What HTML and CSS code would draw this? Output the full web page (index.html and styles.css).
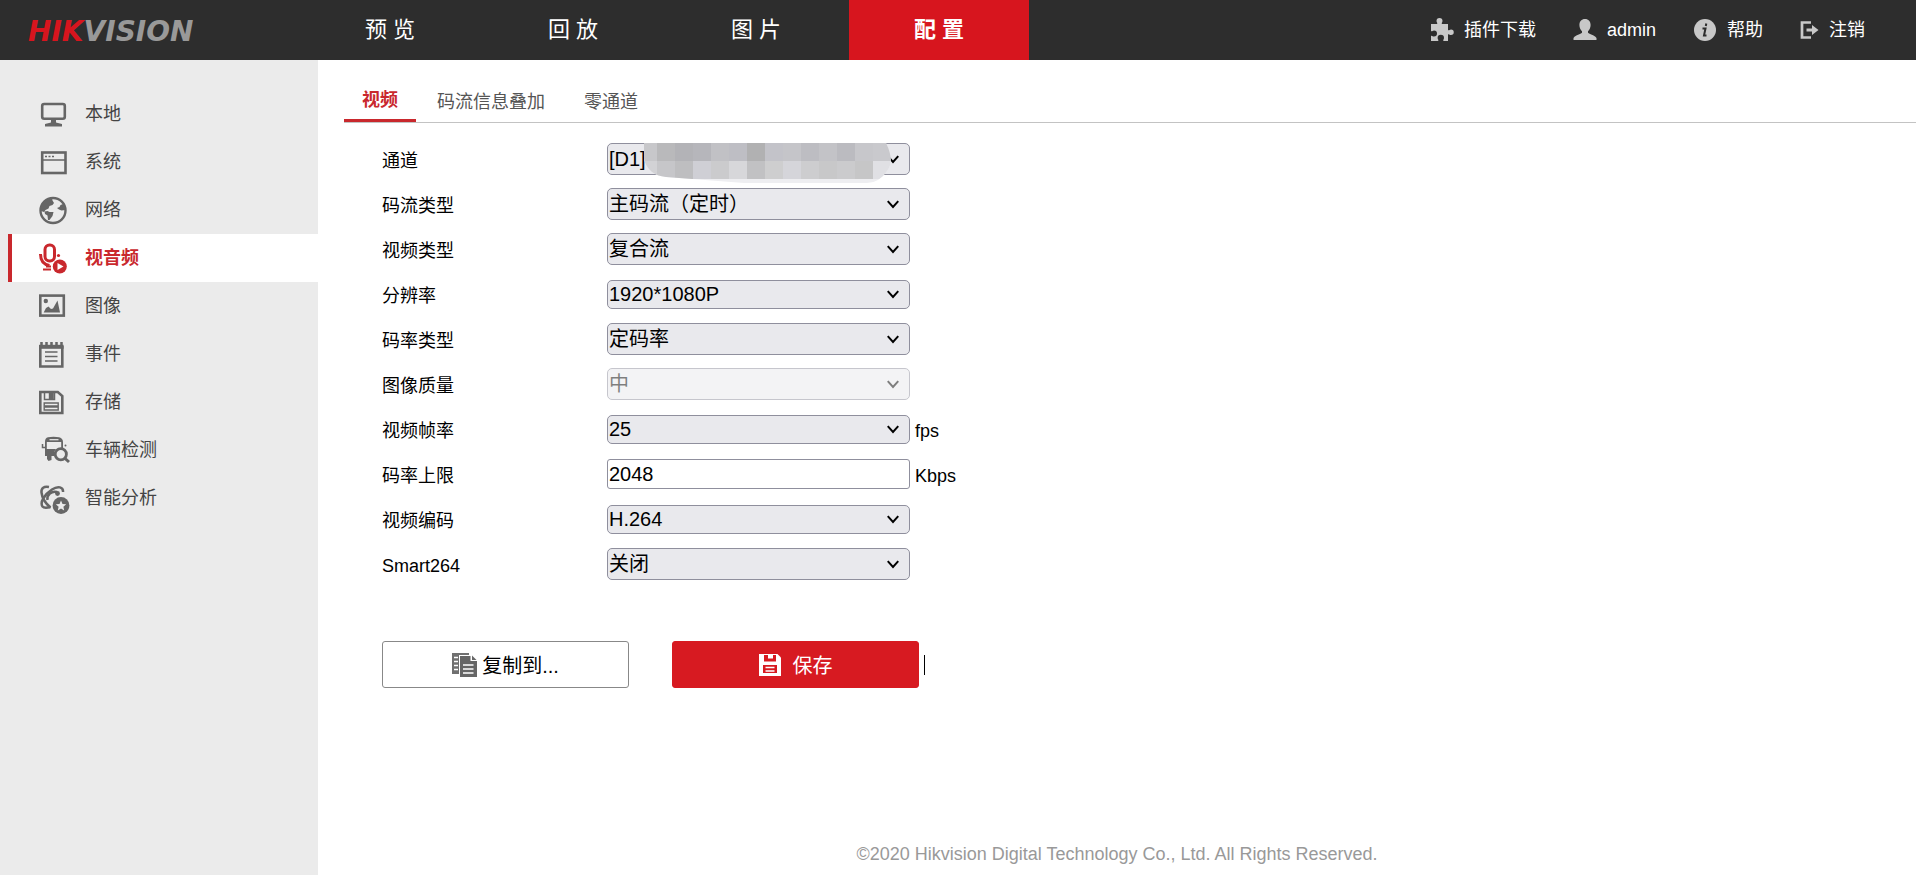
FILE: index.html
```
<!DOCTYPE html>
<html lang="zh-CN">
<head>
<meta charset="UTF-8">
<meta name="viewport" content="width=device-width, initial-scale=1">
<title>配置</title>
<link rel="stylesheet" href="styles.css">
</head>
<body>

<svg class="sprite" aria-hidden="true">
  <symbol id="chevron" viewBox="0 0 12 12">
    <path d="M1.500 3.500 6 8.500l4.500-5" fill="none" stroke="currentColor" stroke-width="1.700"/>
  </symbol>
</svg>

<header class="header">
  <a class="logo" href="#"><span>HIK</span>VISION</a>
  <nav class="nav">
    <a href="#">预 览</a>
    <a href="#">回 放</a>
    <a href="#">图 片</a>
    <a href="#" class="active">配 置</a>
  </nav>
  <div class="tools">
    <a href="#">
      <svg width="24" height="24" viewBox="0 0 24 24" fill="currentColor"><path d="M1 6h6c1-1-.5-1.500-.5-3a3 3 0 0 1 6 0c0 1.500-1.500 2-.5 3h6v6c1 1 1.500-.5 3-.5a2.700 2.700 0 0 1 0 5.500c-1.500 0-2-1.500-3-.5V23h-4.500c-1-1 .5-1.500.5-3a3.200 3.200 0 0 0-6.400 0c0 1.500 1.500 2 .5 3H1v-5c1-1 1.500.5 3 .5a3 3 0 0 0 0-6c-1.500 0-2 1.500-3 .5z"/></svg>
      插件下载
    </a>
    <a href="#">
      <svg width="24" height="24" viewBox="0 0 24 24" fill="currentColor"><path d="M12 1c3.500 0 5.600 2.400 5.600 6 0 2.600-1 4.800-2.600 6.200v1.600c1.500 1.700 6 1.900 8.500 5.200V22H.5v-2c2.500-3.300 7-3.500 8.500-5.200v-1.600C7.400 11.800 6.400 9.600 6.400 7c0-3.600 2.100-6 5.600-6z"/></svg>
      admin
    </a>
    <a href="#">
      <svg width="24" height="24" viewBox="0 0 24 24"><circle cx="12" cy="12" r="11" fill="currentColor"/><path d="M9.500 10.500h3L11 17.500h2.500M13.300 5.500 12.800 8" fill="none" stroke="#2d2d2d" stroke-width="2"/></svg>
      帮助
    </a>
    <a href="#">
      <svg width="19" height="24" viewBox="0 0 19 24"><path d="M11 4.500H2v15h9" fill="none" stroke="currentColor" stroke-width="2.700"/><path d="M6.500 10.500H12V7l6.500 5-6.500 5v-3.500H6.500z" fill="currentColor"/></svg>
      注销
    </a>
  </div>
</header>

<div class="wrap">
  <aside class="sidebar">
    <a href="#">
      <svg viewBox="0 0 32 32"><rect x="3.200" y="6" width="22.600" height="14.700" rx="2" fill="none" stroke="currentColor" stroke-width="2.600"/><path d="M12 21h5v3.500l6 1.500v2.500H6V26l6-1.500z" fill="currentColor"/></svg>
      本地
    </a>
    <a href="#">
      <svg viewBox="0 0 32 32" fill="none" stroke="currentColor"><rect x="3.200" y="6.500" width="23.300" height="20.500" stroke-width="2.600"/><path d="M3 14h24" stroke-width="1.500"/><path d="M6 10.500h2m1.500 0h2m1.500 0h2" stroke-width="1.600"/></svg>
      系统
    </a>
    <a href="#">
      <svg viewBox="0 0 32 32"><circle cx="14" cy="16.500" r="12.500" fill="none" stroke="currentColor" stroke-width="2.400"/><path d="M2 15C3 9 7 5 13 4l.5 2.500L15 9l-1.500 2-3 1-1 2.500-3 1.500L5 18l-3-1zM5.500 17.500l3-.5 2 1 4 0-1 4-3 4H9l-.5-4.500L6 20zM18 14l2.500-1 1-2 4-1.500 1 6.500-4 .5-2.500-1z" fill="currentColor"/></svg>
      网络
    </a>
    <a href="#" class="active">
      <svg viewBox="0 0 32 32"><g fill="none" stroke="currentColor"><rect x="6" y="3" width="9.500" height="16" rx="4.500" stroke-width="3"/><path d="M1.500 12c0 6 3 10.500 9 11.500" stroke-width="3"/><path d="M4 27.500h8M7 24.500h5" stroke-width="2.200"/></g><circle cx="19.500" cy="13.500" r="1.600" fill="currentColor"/><circle cx="20.800" cy="24.500" r="7" fill="currentColor"/><path d="M18.500 21v7l6-3.500z" fill="#fff"/></svg>
      视音频
    </a>
    <a href="#">
      <svg viewBox="0 0 32 32"><rect x="1.300" y="5.600" width="23.500" height="20" fill="none" stroke="currentColor" stroke-width="2.600"/><circle cx="6.800" cy="11" r="2.200" fill="currentColor"/><path d="M4.700 22.500 7 18l2.500-1.500L12 19l2-.5 4.500-8 2.500 12z" fill="currentColor"/></svg>
      图像
    </a>
    <a href="#">
      <svg viewBox="0 0 32 32" fill="none" stroke="currentColor"><path d="M1.300 8v20.500h22V8" stroke-width="2.600"/><path d="M0 8.800h24.600" stroke-width="4"/><path d="M2.500 4v5m5-5v5m5-5v5m5-5v5m5-5v5" stroke-width="2.500"/><path d="M6 14h12.500M6 18.500h12.500M6 23h12.500" stroke-width="1.500"/></svg>
      事件
    </a>
    <a href="#">
      <svg viewBox="0 0 32 32" fill="none" stroke="currentColor"><path d="M1.300 6h17.500l4.500 4v17H1.300z" stroke-width="2.600"/><path d="M5.500 5.500v8h10v-8" stroke-width="1.500"/><path d="M12.300 6v7" stroke-width="5"/><path d="M5.200 17h14v7h-14z" stroke-width="1.400"/><path d="M5.500 20.500h13.500" stroke-width="2.500"/></svg>
      存储
    </a>
    <a href="#">
      <svg viewBox="0 0 32 32"><path d="M6 8c0-3 1-4.200 3-4.700 3-.8 8-.8 11 0 2 .5 4 1.700 4 4.700v6h-1.800V8H7.800v7H17l-2 3v4h-2.500v4L9.500 27 8 25v-3H6z" fill="currentColor"/><path d="M3.500 10v3.500H6" fill="none" stroke="currentColor" stroke-width="1.500"/><path d="M10.500 5.700h9" stroke="#ebebeb" stroke-width="1.200"/><circle cx="26.500" cy="11.500" r="1" fill="currentColor"/><circle cx="21.800" cy="20.300" r="5.600" fill="#ebebeb" stroke="currentColor" stroke-width="2.800"/><path d="m25.500 24 4.500 4" stroke="currentColor" stroke-width="3"/></svg>
      车辆检测
    </a>
    <a href="#">
      <svg viewBox="0 0 32 32"><g fill="none" stroke="currentColor" stroke-width="2.500"><path d="M10 5C5 4 2 6 2.500 10.500S6 21 11.500 25.500"/><path d="M24 10c.5-5-5-6.500-11-2.500C6 12 .5 20 3.500 24.500c1.500 2 4.500 1.500 8 .5"/><path d="M8.500 18c-1-5 4-9.500 9.500-8"/></g><circle cx="18.500" cy="11.500" r="2.400" fill="currentColor"/><circle cx="22" cy="23.500" r="8.400" fill="currentColor"/><path d="m22 18.500 1.500 3.400 3.700.4-2.800 2.500.8 3.700-3.200-1.900-3.200 1.900.8-3.700-2.800-2.500 3.700-.4z" fill="#ebebeb"/></svg>
      智能分析
    </a>
  </aside>

  <main class="main">
    <nav class="tabs">
      <a href="#" class="active">视频</a>
      <a href="#">码流信息叠加</a>
      <a href="#">零通道</a>
    </nav>

    <form class="form">
      <div class="row">
        <label for="channel">通道</label>
        <div class="field">
          <select id="channel"><option>[D1]</option></select>
          <svg class="arrow"><use href="#chevron"/></svg>
          <!-- channel name is masked -->
          <svg class="mask" viewBox="0 0 247 41">
            <clipPath id="smear"><path d="M0 0h242q9 18 1 28-8 12-20 12H100L22 34Q4 32 0 16z"/></clipPath>
            <g clip-path="url(#smear)" shape-rendering="crispEdges">
              <path fill="#eeeef1" d="M0 0h247v41H0z"/>
              <path fill="#c7c7ca" d="M0 0h13v18H0z"/><path fill="#d2d2d5" d="M0 18h13v18H0z"/>
              <path fill="#b9b9bb" d="M13 0h18v18H13z"/><path fill="#c6c6c9" d="M13 18h18v18H13z"/>
              <path fill="#b3b3b7" d="M31 0h18v18H31z"/><path fill="#bebec0" d="M31 18h18v18H31z"/>
              <path fill="#b6b6bb" d="M49 0h18v18H49z"/><path fill="#cfcfd5" d="M49 18h18v18H49z"/>
              <path fill="#c1c1c5" d="M67 0h18v18H67z"/><path fill="#cbcbcd" d="M67 18h18v18H67z"/>
              <path fill="#bebec4" d="M85 0h18v18H85z"/><path fill="#d7d7da" d="M85 18h18v18H85z"/>
              <path fill="#b1b1b2" d="M103 0h18v18h-18z"/><path fill="#c1c1c3" d="M103 18h18v18h-18z"/>
              <path fill="#c3c3c9" d="M121 0h18v18h-18z"/><path fill="#cececf" d="M121 18h18v18h-18z"/>
              <path fill="#c5c5c9" d="M139 0h18v18h-18z"/><path fill="#d5d5da" d="M139 18h18v18h-18z"/>
              <path fill="#bdbdc2" d="M157 0h18v18h-18z"/><path fill="#cdcdcf" d="M157 18h18v18h-18z"/>
              <path fill="#c3c3c7" d="M175 0h18v18h-18z"/><path fill="#c8c8c9" d="M175 18h18v18h-18z"/>
              <path fill="#bbbbc0" d="M193 0h18v18h-18z"/><path fill="#cbcbcd" d="M193 18h18v18h-18z"/>
              <path fill="#c7c7cb" d="M211 0h18v18h-18z"/><path fill="#c6c6c7" d="M211 18h18v18h-18z"/>
              <path fill="#c9c9cd" d="M229 0h18v18h-18z"/><path fill="#e0e0e4" d="M229 18h18v18h-18z"/>
            </g>
          </svg>
        </div>
      </div>
      <div class="row">
        <label for="stream">码流类型</label>
        <div class="field">
          <select id="stream"><option>主码流（定时）</option></select>
          <svg class="arrow"><use href="#chevron"/></svg>
        </div>
      </div>
      <div class="row">
        <label for="video-type">视频类型</label>
        <div class="field">
          <select id="video-type"><option>复合流</option></select>
          <svg class="arrow"><use href="#chevron"/></svg>
        </div>
      </div>
      <div class="row">
        <label for="resolution">分辨率</label>
        <div class="field">
          <select id="resolution" class="short"><option>1920*1080P</option></select>
          <svg class="arrow"><use href="#chevron"/></svg>
        </div>
      </div>
      <div class="row">
        <label for="rate-type">码率类型</label>
        <div class="field">
          <select id="rate-type"><option>定码率</option></select>
          <svg class="arrow"><use href="#chevron"/></svg>
        </div>
      </div>
      <div class="row">
        <label for="quality">图像质量</label>
        <div class="field disabled">
          <select id="quality" disabled><option>中</option></select>
          <svg class="arrow"><use href="#chevron"/></svg>
        </div>
      </div>
      <div class="row">
        <label for="fps">视频帧率</label>
        <div class="field">
          <select id="fps" class="short"><option>25</option></select>
          <svg class="arrow"><use href="#chevron"/></svg>
        </div>
        <span class="unit">fps</span>
      </div>
      <div class="row">
        <label for="bitrate">码率上限</label>
        <div class="field">
          <input id="bitrate" type="text" value="2048">
        </div>
        <span class="unit">Kbps</span>
      </div>
      <div class="row">
        <label for="codec">视频编码</label>
        <div class="field">
          <select id="codec" class="short"><option>H.264</option></select>
          <svg class="arrow"><use href="#chevron"/></svg>
        </div>
      </div>
      <div class="row">
        <label for="smart">Smart264</label>
        <div class="field">
          <select id="smart"><option>关闭</option></select>
          <svg class="arrow"><use href="#chevron"/></svg>
        </div>
      </div>

      <div class="buttons">
        <button type="button" class="btn copy">
          <svg width="25" height="24" viewBox="0 0 25 24"><path d="M0 0h17v2H7v19H0z" fill="#707070"/><path d="M2 4.500h4M2 8.500h4M2 12.500h4M2 16.500h4" stroke="#fff" stroke-width="1.500"/><path d="M8 3h10.500v5H25v16H8z" fill="#666"/><path d="M20 2.500 24.500 7H20z" fill="#666"/><path d="M11 12h10.500M11 16h10.500M11 20h10.500" stroke="#fff" stroke-width="1.500"/></svg>
          复制到...
        </button>
        <button type="button" class="btn save">
          <svg width="22" height="22" viewBox="0 0 22 22"><path d="M0 0h18.500L22 3.500V22H0z" fill="#fff"/><path d="M5 1v6.500h12V1h-3v3.500H9V1zM4 11h14v8H4z" fill="#d71a21"/><path d="M6.500 13.500h9m-9 3.500h9" stroke="#fff" stroke-width="1.500"/></svg>
          保存
        </button>
        <span class="caret"></span>
      </div>
    </form>

    <footer class="footer">©2020 Hikvision Digital Technology Co., Ltd. All Rights Reserved.</footer>
  </main>
</div>

</body>
</html>
```
FILE: styles.css
```
* {
  box-sizing: border-box;
}
body {
  margin: 0;
  min-height: 100vh;
  display: flex;
  flex-direction: column;
  font-family: "Liberation Sans", Arial, "Noto Sans CJK SC", sans-serif;
  font-size: 18px;
  line-height: 24px;
  color: #000;
  background: #fff;
}
a {
  color: inherit;
  text-decoration: none;
}
svg {
  flex: none;
}
.sprite {
  display: none;
}

/* header */
.header {
  display: flex;
  height: 60px;
  background: #2d2d2d;
  color: #fff;
}
.logo {
  width: 300px;
  padding: 2px 0 0 28px;
  font: italic bold 28px/60px "DejaVu Sans", sans-serif;
  color: #999;
}
.logo span {
  color: #d7151e;
}
.nav {
  display: flex;
  gap: 3px;
}
.nav a {
  width: 180px;
  font-size: 22px;
  line-height: 60px;
  text-align: center;
}
.nav .active {
  background: #d7151e;
  font-weight: bold;
}
.tools {
  display: flex;
  gap: 37px;
  margin-left: auto;
  padding-right: 51px;
}
.tools a {
  display: flex;
  align-items: center;
  gap: 10px;
}
.tools svg {
  color: #c8c8c8;
}

/* sidebar */
.wrap {
  flex: 1;
  display: flex;
}
.sidebar {
  width: 318px;
  padding: 30px 0 0 8px;
  background: #ebebeb;
}
.sidebar a {
  display: flex;
  align-items: center;
  gap: 14px;
  height: 48px;
  padding-left: 27px;
  border-left: 4px solid transparent;
  color: #444;
}
.sidebar svg {
  width: 32px;
  height: 32px;
  color: #666;
}
.sidebar .active {
  background: #fff;
  border-color: #c9282d;
  color: #c9282d;
  font-weight: bold;
}
.sidebar .active svg {
  color: #c9282d;
}

/* content */
.main {
  flex: 1;
  display: flex;
  flex-direction: column;
}
.tabs {
  display: flex;
  gap: 3px;
  height: 63px;
  margin-left: 26px;
  border-bottom: 1px solid #c3c3c3;
}
.tabs a {
  padding: 30px 18px 0;
  color: #555;
}
.tabs .active {
  padding-top: 28px;
  border-bottom: 3px solid #c9282d;
  color: #c9282d;
  font-weight: bold;
}
.form {
  display: flex;
  flex-direction: column;
  gap: 13px;
  padding: 20px 0 0 64px;
}
.row {
  display: flex;
  align-items: center;
  height: 32px;
}
.row label {
  width: 225px;
  padding-top: 4px;
}
.field {
  position: relative;
  display: grid;
  align-items: center;
  width: 303px;
}
.field > * {
  grid-area: 1 / 1;
}
.field select,
.field input {
  width: 100%;
  height: 32px;
  margin: 0;
  padding: 0 1px;
  border: 1px solid #8f8f9d;
  border-radius: 5px;
  background: #e9e9ed;
  color: #000;
  font-family: inherit;
  font-size: 20px;
  appearance: none;
}
.field .short {
  height: 29px;
}
.field input {
  height: 30px;
  border-radius: 3px;
  background: #fff;
}
.field.disabled {
  opacity: 0.5;
}
.field select:disabled {
  opacity: 1;
}
.arrow {
  width: 14px;
  height: 14px;
  margin-right: 10px;
  justify-self: end;
  pointer-events: none;
}
.mask {
  position: absolute;
  top: 0;
  left: 37px;
  width: 247px;
  height: 41px;
}
.unit {
  padding: 4px 0 0 5px;
}

/* buttons */
.buttons {
  display: flex;
  align-items: center;
  margin-top: 48px;
}
.btn {
  display: flex;
  align-items: center;
  justify-content: center;
  width: 247px;
  height: 47px;
  padding: 0;
  border: 1px solid #888;
  border-radius: 3px;
  font-family: inherit;
  font-size: 20px;
}
.copy {
  gap: 5px;
  margin-right: 43px;
  background: #fff;
  color: #000;
}
.save {
  gap: 12px;
  border-color: #d71a21;
  background: #d71a21;
  color: #fff;
}
.caret {
  width: 1px;
  height: 20px;
  margin-left: 5px;
  background: #000;
}

.footer {
  margin-top: auto;
  padding: 20px 0 9px;
  text-align: center;
  color: #999;
}
```
